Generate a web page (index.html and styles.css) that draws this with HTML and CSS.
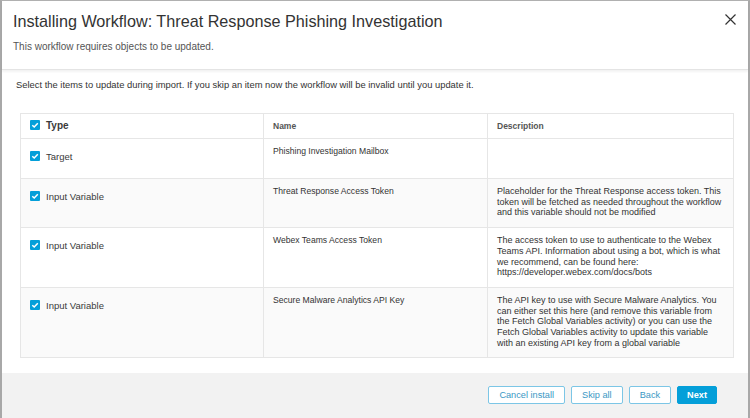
FILE: index.html
```html
<!DOCTYPE html>
<html>
<head>
<meta charset="utf-8">
<link rel="stylesheet" href="styles.css">
</head>
<body>
<div class="modal">
  <header class="head">
    <div class="titles">
      <h1 class="title">Installing Workflow: Threat Response Phishing Investigation</h1>
      <p class="subtitle">This workflow requires objects to be updated.</p>
    </div>
    <button class="close" aria-label="Close">
      <svg width="11" height="11" viewBox="0 0 11 11"><path d="M0.5 0.5 L10.5 10.5 M10.5 0.5 L0.5 10.5" stroke="#333" stroke-width="1.2" fill="none"/></svg>
    </button>
  </header>
  <main class="body">
    <p class="intro">Select the items to update during import. If you skip an item now the workflow will be invalid until you update it.</p>
    <table class="items">
      <colgroup><col class="c1"><col class="c2"><col class="c3"></colgroup>
      <thead>
        <tr>
          <th class="type-h"><span class="cb"></span>Type</th>
          <th class="small-h">Name</th>
          <th class="small-h">Description</th>
        </tr>
      </thead>
      <tbody>
        <tr class="r1">
          <td class="type"><span class="cb"></span>Target</td>
          <td class="name">Phishing Investigation Mailbox</td>
          <td class="desc"></td>
        </tr>
        <tr class="alt">
          <td class="type"><span class="cb"></span>Input Variable</td>
          <td class="name">Threat Response Access Token</td>
          <td class="desc">Placeholder for the Threat Response access token. This token will be fetched as needed throughout the workflow and this variable should not be modified</td>
        </tr>
        <tr>
          <td class="type"><span class="cb"></span>Input Variable</td>
          <td class="name">Webex Teams Access Token</td>
          <td class="desc">The access token to use to authenticate to the Webex Teams API. Information about using a bot, which is what we recommend, can be found here: https://developer.webex.com/docs/bots</td>
        </tr>
        <tr class="alt">
          <td class="type"><span class="cb"></span>Input Variable</td>
          <td class="name">Secure Malware Analytics API Key</td>
          <td class="desc">The API key to use with Secure Malware Analytics. You can either set this here (and remove this variable from the Fetch Global Variables activity) or you can use the Fetch Global Variables activity to update this variable with an existing API key from a global variable</td>
        </tr>
      </tbody>
    </table>
  </main>
  <footer class="foot">
    <button class="btn">Cancel install</button>
    <button class="btn">Skip all</button>
    <button class="btn">Back</button>
    <button class="btn primary">Next</button>
  </footer>
</div>
</body>
</html>
```

FILE: styles.css
```css
* { box-sizing: border-box; }
html, body { margin: 0; padding: 0; }
body {
  width: 750px;
  height: 418px;
  overflow: hidden;
  font-family: "Liberation Sans", Arial, sans-serif;
  color: #333;
  background: #fff;
}
.modal {
  height: 418px;
  border-left: 2px solid #a8a8a8;
  border-right: 2px solid #a8a8a8;
  border-top: 1px solid #b0b0b0;
  display: flex;
  flex-direction: column;
}
.head {
  height: 69px;
  display: flex;
  justify-content: space-between;
  align-items: flex-start;
  padding: 11px 11px 0 11px;
  border-bottom: 1px solid #e4e4e4;
  box-shadow: 0 2px 2px rgba(0,0,0,0.05);
}
.title {
  margin: 0;
  font-size: 16.2px;
  font-weight: normal;
  line-height: 19px;
  color: #333;
}
.subtitle {
  margin: 10px 0 0;
  font-size: 10px;
  line-height: 12px;
  color: #555;
}
.close {
  border: 0;
  background: none;
  padding: 0;
  margin: 2px 1px 0 0;
  width: 11px;
  height: 11px;
  display: block;
}
.close svg { display: block; }
.body {
  flex: 1;
  padding: 9px 15px 0 14px;
}
.intro {
  margin: 0 0 22px;
  font-size: 9.4px;
  line-height: 12px;
  color: #333;
}
.items {
  margin-left: 4px;
  width: 713px;
  border-collapse: collapse;
  table-layout: fixed;
  border: 1px solid #e6e6e6;
}
.c1 { width: 243px; }
.c2 { width: 224px; }
.c3 { width: 246px; }
th, td {
  border: 1px solid #e6e6e6;
  text-align: left;
  vertical-align: top;
}
thead th { height: 25px; }
.type-h {
  padding: 5px 9px 0;
  font-size: 10px;
  font-weight: bold;
  color: #3a3a3a;
  line-height: 14px;
}
.small-h {
  padding: 7px 9px 0;
  font-size: 8.5px;
  font-weight: bold;
  color: #555;
  line-height: 10px;
}
.cb {
  display: inline-block;
  width: 10px;
  height: 10px;
  border-radius: 1px;
  background: #049fd9 url("data:image/svg+xml,%3Csvg xmlns='http://www.w3.org/2000/svg' width='10' height='10'%3E%3Cpath d='M2.3 5.2 L4.2 7 L7.8 3.2' stroke='white' stroke-width='1.5' fill='none'/%3E%3C/svg%3E") no-repeat center;
  vertical-align: -1px;
  margin-right: 6px;
}
.type {
  padding: 11px 9px 0;
  font-size: 9.5px;
  line-height: 13px;
  color: #3a3a3a;
}
.name {
  padding: 7px 9px 0;
  font-size: 8.6px;
  line-height: 11px;
  color: #333;
}
.desc {
  padding: 7px 7px 9px 9px;
  font-size: 9px;
  line-height: 10.7px;
  color: #333;
}
.r1 td { height: 40px; }
.alt td { background: #fafafa; }
.foot {
  height: 45px;
  background: #f2f2f2;
  display: flex;
  justify-content: flex-end;
  align-items: flex-start;
  gap: 6px;
  padding: 13px 31px 0 0;
}
.btn {
  height: 18px;
  padding: 0 10px;
  border: 1px solid #7cc6e6;
  border-radius: 2px;
  background: #fff;
  color: #3a97c4;
  font-family: "Liberation Sans", Arial, sans-serif;
  font-size: 9.2px;
  line-height: 16px;
}
.btn.primary {
  background: #049fd9;
  border-color: #049fd9;
  color: #fff;
  font-weight: bold;
  padding: 0 9px;
}
```
